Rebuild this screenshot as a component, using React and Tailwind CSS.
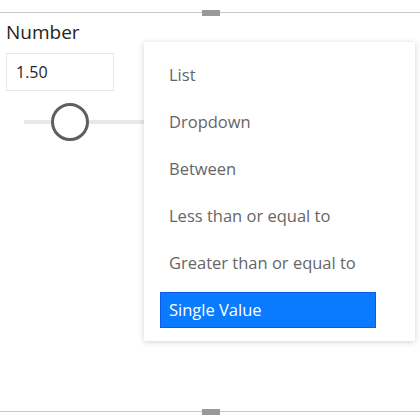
export default function App() {
  const items = ["List", "Dropdown", "Between", "Less than or equal to", "Greater than or equal to"];
  return (
    <div className="relative w-[420px] h-[420px] bg-white overflow-hidden pt-[12px]" style={{ fontFamily: '"Open Sans", "Noto Sans", sans-serif' }}>
      <div className="relative h-[400px] border-t border-b border-[#c8c8c8]">
        <div className="absolute left-[202px] top-[-3px] w-[18px] h-[6px] bg-[#999999]" />
        <div className="absolute left-[202px] bottom-[-4px] w-[18px] h-[6px] bg-[#999999]" />

        <div className="flex flex-col pt-[6px] pl-[6px]">
          <div className="text-[19px] leading-[26px] text-[#252423]">Number</div>
          <div className="mt-[8px] w-[108px] h-[38px] border border-[#e6e6e6] flex items-center pl-[9px] text-[16px] text-[#252423]">1.50</div>
          <div className="relative mt-[11px] h-[40px] w-[200px] flex items-center pl-[18px]">
            <div className="h-[4px] flex-1 bg-[#e8e8e8]" />
            <div className="absolute left-[45px] top-[1px] w-[38px] h-[38px] rounded-full border-[3px] border-[#5f5f5f] bg-white" />
          </div>
        </div>

        <div className="absolute left-[144px] top-[29px] w-[271px] h-[299px] bg-white shadow-[0_1px_6px_rgba(0,0,0,0.18)] pt-[15px] pl-[16px] flex flex-col gap-[11px]">
          {items.map((t) => (
            <div key={t} className="h-[36px] w-[216px] flex items-center pl-[9px] text-[16.5px] text-[#666666]">{t}</div>
          ))}
          <div className="h-[36px] w-[216px] flex items-center pl-[8px] text-[16.5px] text-white bg-[#0a7aff] border border-[#0a5ce6]">Single Value</div>
        </div>
      </div>
    </div>
  );
}
